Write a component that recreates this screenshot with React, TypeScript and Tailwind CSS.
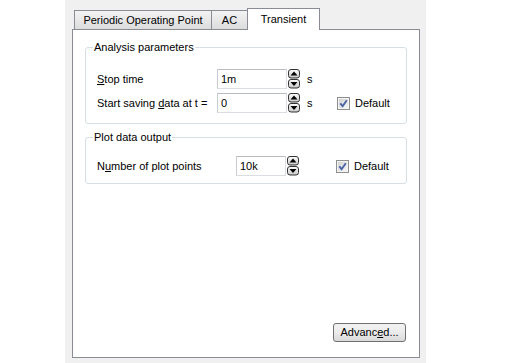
import React from 'react';

function Spinner() {
  return (
    <svg width="12" height="20" viewBox="0 0 12 20" className="shrink-0">
      <defs>
        <linearGradient id="spin-g" x1="0" y1="0" x2="0" y2="1">
          <stop offset="0" stopColor="#ffffff" />
          <stop offset="1" stopColor="#c8c8c8" />
        </linearGradient>
      </defs>
      <rect x="0.5" y="0.5" width="11" height="8.5" rx="2.5" fill="url(#spin-g)" stroke="#333" />
      <path d="M2.5 6.5 L6 2.5 L9.5 6.5 Z" fill="#000" />
      <rect x="0.5" y="10.5" width="11" height="8.5" rx="2.5" fill="url(#spin-g)" stroke="#333" />
      <path d="M2.5 13 L6 17 L9.5 13 Z" fill="#000" />
    </svg>
  );
}

function CheckBox() {
  return (
    <svg width="13" height="13" viewBox="0 0 13 13" className="shrink-0">
      <defs>
        <linearGradient id="chk-g" x1="0" y1="0" x2="1" y2="1">
          <stop offset="0" stopColor="#d2d2d2" />
          <stop offset="1" stopColor="#f6f6f6" />
        </linearGradient>
      </defs>
      <rect x="0.5" y="0.5" width="12" height="12" fill="#f4f4f4" stroke="#8e8f8f" />
      <rect x="2" y="2" width="9" height="9" fill="url(#chk-g)" />
      <path d="M3.3 6.3 L5.6 9.2 L9.8 3.2" stroke="#4a64a6" strokeWidth="1.9" fill="none" />
    </svg>
  );
}

function TextBox({ value, width }: { value: string; width: string }) {
  return (
    <div
      className={`${width} h-[20px] shrink-0 bg-white border border-[#dadde1] border-t-[#b9bcc1] border-l-[#c9ccd0] pl-[3px] flex items-center`}
    >
      {value}
    </div>
  );
}

function Default() {
  return (
    <div className="flex items-center gap-[5px]">
      <CheckBox />
      <span>Default</span>
    </div>
  );
}

export default function App() {
  return (
    <div className="w-[519px] h-[363px] bg-white flex font-['Liberation_Sans',Arial,sans-serif] text-[11px] leading-[13px] text-black">
      <div className="w-[65px]" />
      <div className="w-[361px] h-full bg-[#f0f0f0] pl-[7px] pt-[8px] flex flex-col">
        {/* Tabs */}
        <div className="flex items-end h-[21px] pl-[2px]">
          <div className="w-[138px] h-[19px] border border-b-0 border-[#898c95] bg-gradient-to-b from-[#f3f3f3] to-[#dcdcdc] flex items-center justify-center">
            Periodic Operating Point
          </div>
          <div className="w-[36px] h-[19px] border border-l-0 border-b-0 border-[#898c95] bg-gradient-to-b from-[#f3f3f3] to-[#dcdcdc] flex items-center justify-center">
            AC
          </div>
          <div className="relative z-10 -ml-px w-[73px] h-[22px] -mb-px border border-b-0 border-[#898c95] bg-white flex items-start pt-[4px] justify-center">
            Transient
          </div>
        </div>

        {/* Panel */}
        <div className="w-[348px] h-[329px] border border-[#898c95] bg-white px-[12px] pt-[11px] pb-[15px] flex flex-col">
          <fieldset className="border border-[#d5dfe5] rounded-[3px] pl-[11px] pt-[15px] pb-[10px]">
            <legend className="ml-[-4px] px-[1px] leading-[13px]">Analysis parameters</legend>
            <div className="flex items-center">
              <span className="w-[120px]">
                <span className="underline">S</span>top time
              </span>
              <TextBox value="1m" width="w-[70px]" />
              <div className="ml-px"><Spinner /></div>
              <span className="w-[37px] pl-[7px]">s</span>
            </div>
            <div className="flex items-center mt-[4px]">
              <span className="w-[120px]">
                Start saving <span className="underline">d</span>ata at t =
              </span>
              <TextBox value="0" width="w-[70px]" />
              <div className="ml-px"><Spinner /></div>
              <span className="w-[37px] pl-[7px]">s</span>
              <Default />
            </div>
          </fieldset>

          <fieldset className="mt-[7px] border border-[#d5dfe5] rounded-[3px] pl-[11px] pt-[12px] pb-[7px]">
            <legend className="ml-[-4px] px-[1px] leading-[13px]">Plot data output</legend>
            <div className="flex items-center">
              <span className="w-[139px]">
                N<span className="underline">u</span>mber of plot points
              </span>
              <TextBox value="10k" width="w-[50px]" />
              <div className="ml-px"><Spinner /></div>
              <span className="w-[37px]" />
              <Default />
            </div>
          </fieldset>

          <div className="mt-auto flex justify-end pr-px">
            <button className="w-[73px] h-[19px] rounded-[3px] border border-[#707070] bg-gradient-to-b from-[#f2f2f2] via-[#ebebeb] to-[#d9d9d9] flex items-center justify-center">
              Advanc<span className="underline">e</span>d...
            </button>
          </div>
        </div>
      </div>
    </div>
  );
}
